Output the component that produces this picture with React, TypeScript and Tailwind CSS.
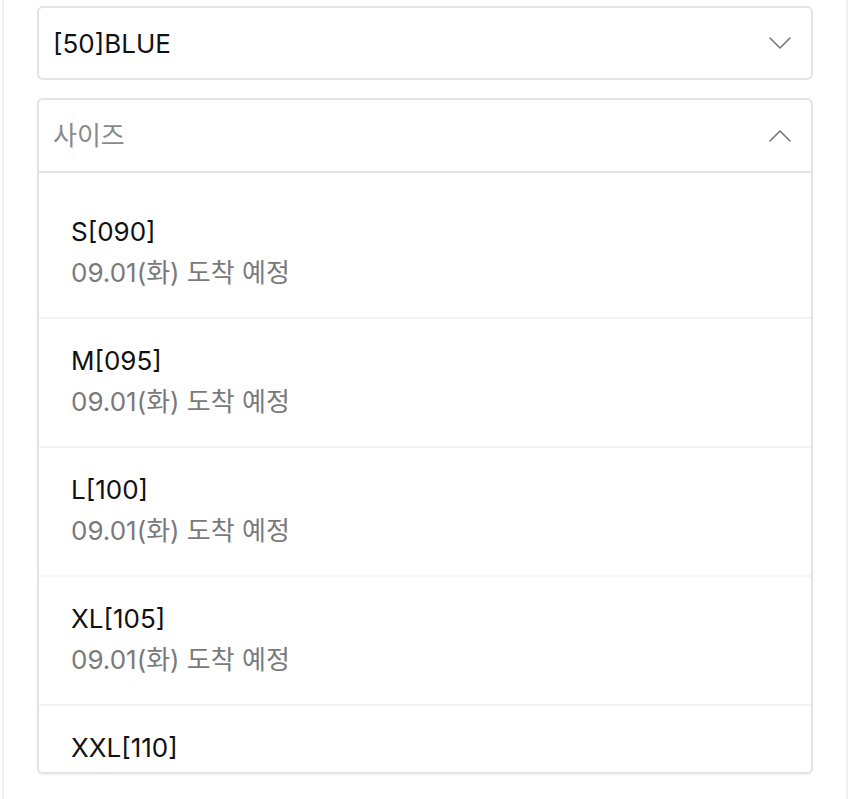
import React from 'react';

const sizes = ['S[090]', 'M[095]', 'L[100]', 'XL[105]', 'XXL[110]'];

const Chevron = ({ up = false }: { up?: boolean }) => (
  <svg width="24" height="14" viewBox="0 0 24 14" fill="none" className="shrink-0">
    <path
      d={up ? 'M2 12 L12 2 L22 12' : 'M2 2 L12 12 L22 2'}
      stroke="#777"
      strokeWidth="1.6"
      strokeLinecap="round"
      strokeLinejoin="round"
    />
  </svg>
);

const App = () => {
  return (
    <div
      className="w-[850px] h-[799px] bg-white overflow-hidden"
      style={{ fontFamily: 'Inter, "Noto Sans CJK KR", sans-serif' }}
    >
      <div className="mx-[2px] h-full border-x-2 border-[#f0f0f0] px-[33px] pt-[6px]">
        {/* color select */}
        <div className="h-[74px] rounded-md border-2 border-[#e3e3e3] flex items-center justify-between pl-[14px] pr-[19px]">
          <span className="text-[26px] text-[#111]">[50]BLUE</span>
          <Chevron />
        </div>

        {/* size select, opened */}
        <div className="mt-[18px] rounded-md border-2 border-[#e3e3e3] overflow-hidden shadow-[0_1px_2px_rgba(0,0,0,0.06)]">
          <div className="h-[73px] flex items-center justify-between pl-[14px] pr-[19px] border-b-2 border-[#e3e3e3]">
            <span className="text-[26px] text-[#8a8a8a]">사이즈</span>
            <Chevron up />
          </div>
          <ul className="h-[599px] overflow-hidden pt-[17px]">
            {sizes.map((s, i) => {
              const last = i === sizes.length - 1;
              return (
                <li
                  key={s}
                  className={
                    'h-[129px] pl-[32px] pt-[24px] flex flex-col gap-[5px] ' +
                    (last ? '' : 'border-b-2 border-[#f3f3f3]')
                  }
                >
                  <span className="text-[26px] leading-[36px] text-[#111]">{s}</span>
                  {!last && (
                    <span className="text-[26px] leading-[36px] text-[#7a7a7a]">09.01(화) 도착 예정</span>
                  )}
                </li>
              );
            })}
          </ul>
        </div>
      </div>
    </div>
  );
};

export default App;
